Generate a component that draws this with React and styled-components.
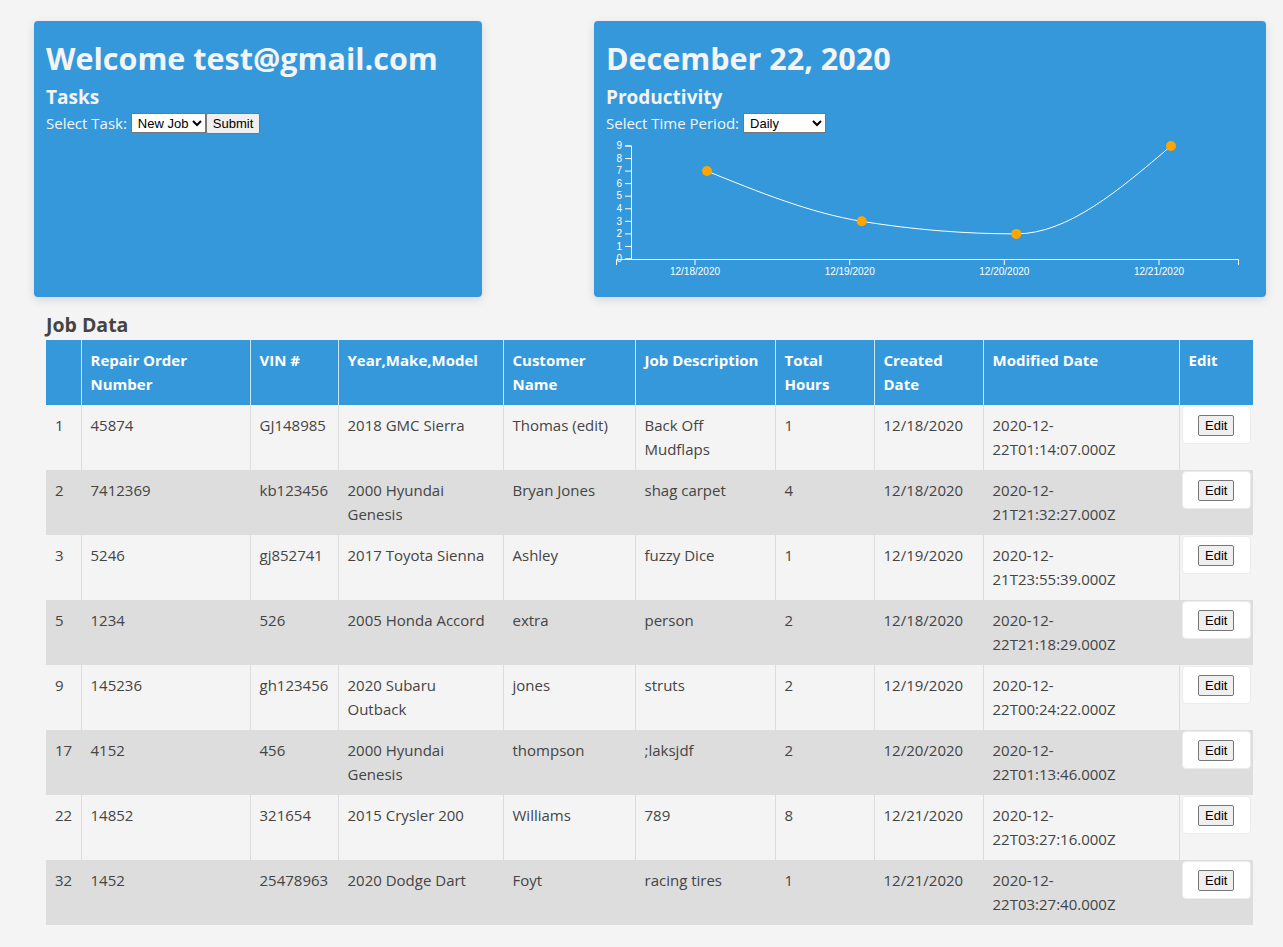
import React from "react";
import styled, { createGlobalStyle } from "styled-components";

const Global = createGlobalStyle`
  html, body { margin: 0; padding: 0; background: #f4f4f4; }
  body { font-family: "Open Sans", "Noto Sans", sans-serif; color: #444; }
  * { box-sizing: border-box; }
`;

const Page = styled.div`
  padding: 21px 17px 22px 34px;
`;

const TopRow = styled.div`
  display: flex;
  justify-content: space-between;
  align-items: stretch;
`;

const Card = styled.div`
  width: ${(p) => p.$w}px;
  background: #3498db;
  color: #f4f4f4;
  border-radius: 4px;
  padding: 18px 12px 17px;
  box-shadow: 0 3px 10px rgba(0, 0, 0, 0.12);
`;

const Title = styled.h1`
  margin: 0;
  font-size: 30.5px;
  line-height: 38px;
  font-weight: 700;
`;

const SubTitle = styled.h2`
  margin: 8px 0 0;
  font-size: 19px;
  line-height: 24px;
  font-weight: 700;
`;

const ControlRow = styled.div`
  margin-top: 3px;
  display: flex;
  align-items: center;
  font-size: 15px;
  line-height: 22px;
`;

const Label = styled.span`
  margin-right: 4px;
`;

const Select = styled.select`
  font-family: "Liberation Sans", Arial, sans-serif;
  font-size: 13px;
  height: 20px;
  width: ${(p) => p.$w}px;
  background: #fff;
  color: #000;
  border: 1px solid #767676;
  border-radius: 0;
  padding: 0 0 0 2px;
`;

const NativeButton = styled.button`
  font-family: "Liberation Sans", Arial, sans-serif;
  font-size: 13px;
  height: ${(p) => p.$h || 21}px;
  padding: 0 6px;
  background: #efefef;
  color: #000;
  border: 1px solid #767676;
  border-radius: 2px;
`;

const ChartSvg = styled.svg`
  display: block;
  margin-top: 4px;
  overflow: visible;
`;

const Section = styled.div`
  padding-left: 12px;
`;

const SectionTitle = styled.h3`
  margin: 16px 0 3px;
  font-size: 19.5px;
  line-height: 24px;
  font-weight: 700;
  color: #444;
`;

const Table = styled.table`
  width: 1207px;
  border-collapse: collapse;
  table-layout: fixed;
  font-size: 15px;
  line-height: 24px;
`;

const Th = styled.th`
  background: #3498db;
  color: #fff;
  font-weight: 700;
  text-align: left;
  vertical-align: top;
  padding: 8px 9px;
  height: 64px;
  border-right: 1px solid rgba(255, 255, 255, 0.75);
  &:last-child { border-right: none; }
`;

const Tr = styled.tr`
  background: ${(p) => (p.$alt ? "#dddddd" : "#f4f4f4")};
`;

const Td = styled.td`
  vertical-align: top;
  padding: 8px 9px;
  height: 65px;
  color: #444;
  border-right: 1px solid #dddddd;
  border-top: 1px solid transparent;
`;

const EditTd = styled.td`
  vertical-align: top;
  padding: 1px 2px 0;
  height: 65px;
  border-top: 1px solid transparent;
`;

const EditBox = styled.div`
  background: #fff;
  border-radius: 4px;
  border: 1px solid #ececec;
  height: 38px;
  display: flex;
  justify-content: center;
  padding-top: 8px;
`;

const cols = [35, 169, 88, 165, 132, 140, 99, 109, 196, 74];
const headers = [
  "",
  "Repair Order Number",
  "VIN #",
  "Year,Make,Model",
  "Customer Name",
  "Job Description",
  "Total Hours",
  "Created Date",
  "Modified Date",
  "Edit",
];

const rows = [
  ["1", "45874", "GJ148985", "2018 GMC Sierra", "Thomas (edit)", "Back Off Mudflaps", "1", "12/18/2020", "2020-12-22T01:14:07.000Z"],
  ["2", "7412369", "kb123456", "2000 Hyundai Genesis", "Bryan Jones", "shag carpet", "4", "12/18/2020", "2020-12-21T21:32:27.000Z"],
  ["3", "5246", "gj852741", "2017 Toyota Sienna", "Ashley", "fuzzy Dice", "1", "12/19/2020", "2020-12-21T23:55:39.000Z"],
  ["5", "1234", "526", "2005 Honda Accord", "extra", "person", "2", "12/18/2020", "2020-12-22T21:18:29.000Z"],
  ["9", "145236", "gh123456", "2020 Subaru Outback", "jones", "struts", "2", "12/19/2020", "2020-12-22T00:24:22.000Z"],
  ["17", "4152", "456", "2000 Hyundai Genesis", "thompson", ";laksjdf", "2", "12/20/2020", "2020-12-22T01:13:46.000Z"],
  ["22", "14852", "321654", "2015 Crysler 200", "Williams", "789", "8", "12/21/2020", "2020-12-22T03:27:16.000Z"],
  ["32", "1452", "25478963", "2020 Dodge Dart", "Foyt", "racing tires", "1", "12/21/2020", "2020-12-22T03:27:40.000Z"],
];

const chartData = [
  { label: "12/18/2020", v: 7 },
  { label: "12/19/2020", v: 3 },
  { label: "12/20/2020", v: 2 },
  { label: "12/21/2020", v: 9 },
];

const Y0 = 121;
const YS = 12.56;
const yOf = (v) => Y0 - v * YS;
const tickX = [89, 243.7, 398.3, 553];

function monotonePath(pts) {
  const n = pts.length;
  const s = [];
  for (let i = 0; i < n - 1; i++) s.push((pts[i + 1][1] - pts[i][1]) / (pts[i + 1][0] - pts[i][0]));
  const t = new Array(n).fill(0);
  for (let i = 1; i < n - 1; i++) {
    const h0 = pts[i][0] - pts[i - 1][0];
    const h1 = pts[i + 1][0] - pts[i][0];
    const p = (s[i - 1] * h1 + s[i] * h0) / (h0 + h1);
    t[i] = (Math.sign(s[i - 1]) + Math.sign(s[i])) * Math.min(Math.abs(s[i - 1]), Math.abs(s[i]), 0.5 * Math.abs(p)) || 0;
  }
  t[0] = (3 * s[0] - t[1]) / 2;
  t[n - 1] = (3 * s[n - 2] - t[n - 2]) / 2;
  let d = `M${pts[0][0]},${pts[0][1]}`;
  for (let i = 0; i < n - 1; i++) {
    const dx = (pts[i + 1][0] - pts[i][0]) / 3;
    d += `C${pts[i][0] + dx},${pts[i][1] + dx * t[i]},${pts[i + 1][0] - dx},${pts[i + 1][1] - dx * t[i + 1]},${pts[i + 1][0]},${pts[i + 1][1]}`;
  }
  return d;
}

function Chart() {
  const pts = chartData.map((d, i) => [tickX[i] + 12, yOf(d.v)]);
  const axisFont = { fontFamily: "'Liberation Sans', Arial, sans-serif", fontSize: 10 };
  return (
    <ChartSvg width="648" height="142" viewBox="0 0 648 142">
      <g fill="none" stroke="#fff" strokeWidth="1">
        <path d={`M19,${yOf(9)}H25.5V${Y0}H19`} />
        {Array.from({ length: 10 }, (_, v) => (
          <line key={v} x1="19" x2="25" y1={yOf(v)} y2={yOf(v)} />
        ))}
        <path d={`M10.5,127V${Y0}.5H632.5V127`} />
        {tickX.map((x) => (
          <line key={x} x1={x} x2={x} y1={Y0} y2={127} />
        ))}
        <path d={monotonePath(pts)} />
      </g>
      <g fill="#fff" style={axisFont}>
        {Array.from({ length: 10 }, (_, v) => (
          <text key={v} x="16" y={yOf(v)} dy="0.32em" textAnchor="end">{v}</text>
        ))}
        {chartData.map((d, i) => (
          <text key={d.label} x={tickX[i]} y={Y0 + 9} dy="0.71em" textAnchor="middle">{d.label}</text>
        ))}
      </g>
      {pts.map(([x, y]) => (
        <circle key={x} cx={x} cy={y} r="5" fill="#ffa500" />
      ))}
    </ChartSvg>
  );
}

export default function App() {
  return (
    <>
      <Global />
      <Page>
        <TopRow>
          <Card $w={448}>
            <Title>Welcome test@gmail.com</Title>
            <SubTitle>Tasks</SubTitle>
            <ControlRow>
              <Label>Select Task:</Label>
              <Select $w={75} defaultValue="New Job">
                <option>New Job</option>
              </Select>
              <NativeButton>Submit</NativeButton>
            </ControlRow>
          </Card>
          <Card $w={672}>
            <Title>December 22, 2020</Title>
            <SubTitle>Productivity</SubTitle>
            <ControlRow>
              <Label>Select Time Period:</Label>
              <Select $w={83} defaultValue="Daily">
                <option>Daily</option>
                <option>Weekly</option>
                <option>Monthly</option>
              </Select>
            </ControlRow>
            <Chart />
          </Card>
        </TopRow>
        <Section>
          <SectionTitle>Job Data</SectionTitle>
          <Table>
            <colgroup>
              {cols.map((w, i) => (
                <col key={i} style={{ width: w }} />
              ))}
            </colgroup>
            <thead>
              <tr>
                {headers.map((h, i) => (
                  <Th key={i}>{h}</Th>
                ))}
              </tr>
            </thead>
            <tbody>
              {rows.map((r, ri) => (
                <Tr key={ri} $alt={ri % 2 === 1}>
                  {r.map((c, ci) => (
                    <Td key={ci}>{c}</Td>
                  ))}
                  <EditTd>
                    <EditBox>
                      <NativeButton $h={21}>Edit</NativeButton>
                    </EditBox>
                  </EditTd>
                </Tr>
              ))}
            </tbody>
          </Table>
        </Section>
      </Page>
    </>
  );
}
